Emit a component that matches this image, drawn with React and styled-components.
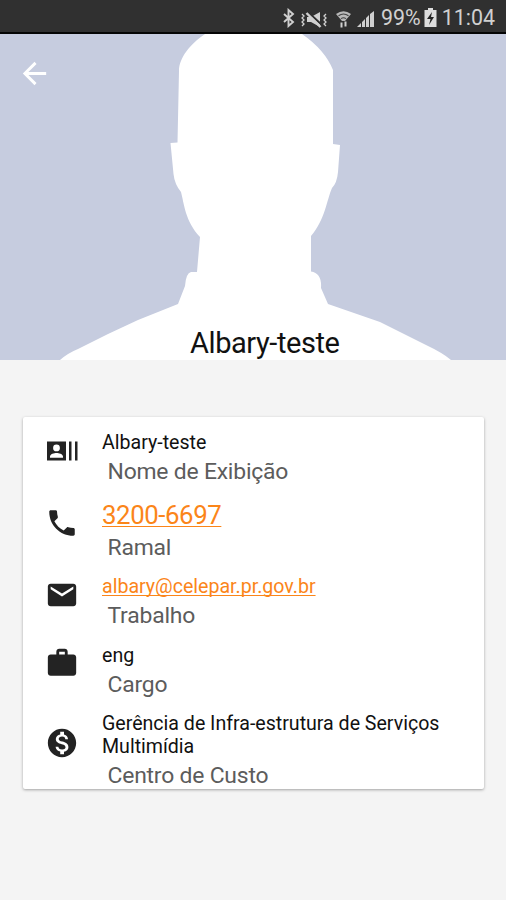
import React from 'react';
import styled, { createGlobalStyle } from 'styled-components';
import { MdPhone, MdEmail, MdWork, MdMonetizationOn, MdArrowBack } from 'react-icons/md';

const GlobalStyle = createGlobalStyle`
  * { box-sizing: border-box; }
  body { margin: 0; background: #f4f4f4; font-family: Roboto, sans-serif; }
`;

const Screen = styled.main`
  display: flex;
  flex-direction: column;
  width: 506px;
  height: 900px;
  overflow: hidden;
  background: #f4f4f4;
`;

const StatusBar = styled.header`
  display: flex;
  flex: none;
  align-items: center;
  height: 34px;
  padding: 3px 0 0 279px;
  background: #303030;
  border-bottom: 2px solid #050505;
  color: #d0d0d0;
`;

const StatusText = styled.span`
  font-size: 21.4px;
  line-height: 24px;
  white-space: nowrap;
`;

const StatusIcons = styled.svg`
  flex: none;
  display: block;
`;

const Hero = styled.section`
  display: grid;
  flex: none;
  height: 326px;
  background: #c6ccdf;
  overflow: hidden;

  & > * { grid-area: 1 / 1; }
`;

const Silhouette = styled.svg`
  display: block;
`;

const BackButton = styled.button`
  display: flex;
  align-self: start;
  justify-self: start;
  margin: 22px 0 0 17px;
  padding: 0;
  border: 0;
  background: none;
  color: #fff;
  font-size: 35px;
`;

const Name = styled.h1`
  align-self: end;
  margin: 0 0 1px 190px;
  font-size: 29px;
  font-weight: 400;
  line-height: 32px;
  letter-spacing: -0.42px;
  color: #111;
`;

const Card = styled.section`
  flex: none;
  width: 461px;
  margin: 57px 0 0 23px;
  background: #fff;
  border-radius: 2px;
  box-shadow: 0 1px 3px rgba(0, 0, 0, 0.34);
`;

const Row = styled.article`
  display: grid;
  grid-template-columns: 79px 1fr;
  align-items: center;
  height: ${(p) => p.$height}px;
`;

const RowIcon = styled.div`
  display: flex;
  justify-content: center;
  padding: 0 1px 1px 0;
  font-size: 34px;
  color: #232323;
`;

const Details = styled.div`
  align-self: end;
`;

const Value = styled.div`
  font-size: ${(p) => (p.$large ? 25.8 : 19.6)}px;
  line-height: ${(p) => (p.$large ? 31 : 23)}px;
  letter-spacing: ${(p) => (p.$large ? -0.42 : -0.01)}px;
  margin-bottom: ${(p) => (p.$large ? 4 : 5)}px;
  color: #111;
  white-space: pre-line;
`;

const ValueLink = styled.a`
  color: #fb8519;
  text-decoration: underline;
  text-decoration-thickness: 1.4px;
  text-underline-offset: 2px;
  text-decoration-skip-ink: none;
`;

const Label = styled.div`
  padding-left: 5.5px;
  font-size: 22.9px;
  line-height: 26px;
  letter-spacing: -0.2px;
  color: #5c5c5c;
`;

function ContactCardIcon() {
  return (
    <svg width="34" height="34" viewBox="0 0 34 34" fill="currentColor">
      <path
        fillRule="evenodd"
        d="M2 7.500h19v19h-19zM11.500 10.500a3.400 3.400 0 1 0 0 6.800a3.400 3.400 0 0 0 0-6.800M5 23.800h13v-1.300c0-2.500-4.200-3.600-6.500-3.600s-6.500 1.100-6.500 3.600z"
      />
      <path d="M24 7.500h2.500v19h-2.500zM30 7.500h2.500v19h-2.500z" />
    </svg>
  );
}

const fields = [
  { icon: ContactCardIcon, value: 'Albary-teste', label: 'Nome de Exibição', height: 68 },
  { icon: MdPhone, value: '3200-6697', label: 'Ramal', height: 76, href: 'tel:32006697', large: true },
  { icon: MdEmail, value: 'albary@celepar.pr.gov.br', label: 'Trabalho', height: 68, href: 'mailto:albary@celepar.pr.gov.br' },
  { icon: MdWork, value: 'eng', label: 'Cargo', height: 69 },
  { icon: MdMonetizationOn, value: 'Gerência de Infra-estrutura de Serviços\nMultimídia', label: 'Centro de Custo', height: 91 },
];

function Field({ icon: Icon, value, label, height, href, large }) {
  return (
    <Row $height={height}>
      <RowIcon><Icon /></RowIcon>
      <Details>
        <Value $large={large}>
          {href ? <ValueLink href={href}>{value}</ValueLink> : value}
        </Value>
        <Label>{label}</Label>
      </Details>
    </Row>
  );
}

export default function App() {
  return (
    <Screen>
      <GlobalStyle />
      <StatusBar>
        <StatusIcons width="20" height="20" viewBox="0 0 20 20" fill="none" stroke="#d0d0d0">
          <path d="M5 6l9 8-4.500 4V2L14 6l-9 8" strokeWidth="1.900" />
        </StatusIcons>
        <StatusIcons width="82" height="30" viewBox="299 1 82 30" fill="none" stroke="#d0d0d0">
          <path d="M302 12l2 2-2 2 2 2-2 2 2 2-2 2M326 12l-2 2 2 2-2 2 2 2-2 2 2 2" strokeWidth="1.3" />
          <path d="M307 15h4l9-5v15l-9-5h-4z" fill="#d0d0d0" stroke="none" />
          <path d="M308.500 10.500l14 13" stroke="#303030" strokeWidth="2" />
          <path d="M306.500 11l14 14" strokeWidth="2.400" />
          <path d="M336 12q7.500-5.500 15 0l-6 7h-3z" fill="#b8b8b8" stroke="none" />
          <path d="M338.500 13.700q5-3.300 10 0M341 16.600q2.500-1.800 5 0" stroke="#404040" strokeWidth="1.1" />
          <path d="M341.500 20.500v5M345.500 19.500v5" strokeWidth="2" />
          <path d="M357 25l4-4v4zM362 20l3-3v8h-3zM366 16l3-3v12h-3zM370 12l4-3v16h-4z" fill="#d0d0d0" stroke="none" />
        </StatusIcons>
        <StatusText>99%</StatusText>
        <StatusIcons width="21" height="30" viewBox="0 0 21 30">
          <path d="M7 5h5v2h3.500v17h-12V7H7z" fill="#dedede" />
          <path d="M11 9l-5 7h3.500l-1.500 6 5-8h-3z" fill="#252525" />
        </StatusIcons>
        <StatusText>11:04</StatusText>
      </StatusBar>
      <Hero>
        <Silhouette width="506" height="326" viewBox="0 34 506 326">
          <path
            fill="#fff"
            d="M205 34C190 44 179 58 179 71L177.500 142.500L170.500 143L173.500 174Q174.500 184 181 192C184 203 185 221 200 237L197 272H191Q186 273 185 286L178 304L138 320L108 334L78 349Q68 353 60 360H451Q443 353 426 345L380 322L328 304L321 288Q322 273 311 271.500V236C325 220 327 199 332 188Q337 183 338 172L340 145L333 144V70Q325 50 302 34Z"
          />
        </Silhouette>
        <BackButton aria-label="Voltar"><MdArrowBack /></BackButton>
        <Name>Albary-teste</Name>
      </Hero>
      <Card>
        {fields.map((field) => <Field key={field.label} {...field} />)}
      </Card>
    </Screen>
  );
}
